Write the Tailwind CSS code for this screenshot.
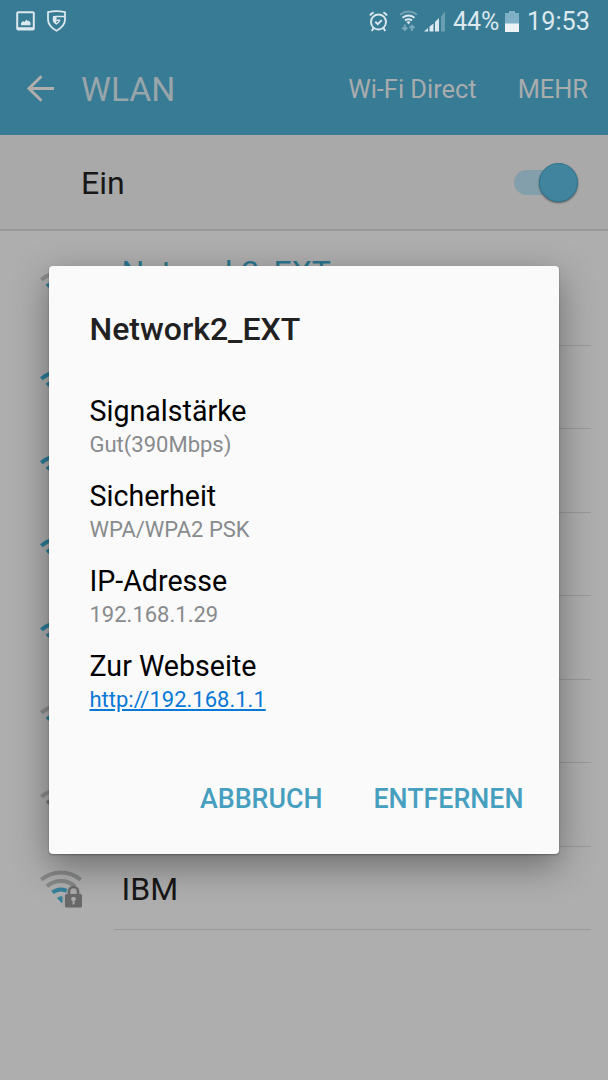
<!DOCTYPE html>
<html lang="de">
<head>
    <meta charset="UTF-8">
    <meta name="viewport" content="width=device-width, initial-scale=1.0">
    <title>WLAN</title>
    <script src="https://cdn.jsdelivr.net/npm/@tailwindcss/browser@4"></script>
</head>
<body class="bg-[#aeaeae] font-['Roboto',sans-serif]">
    <!-- wifi arcs, outer to inner -->
    <svg class="hidden">
        <symbol id="arc1" viewBox="0 0 42 38"><path d="M1.3 9.8a30 30 0 0 1 39.4 0" fill="none" stroke="currentColor" stroke-width="4"/></symbol>
        <symbol id="arc2" viewBox="0 0 42 38"><path d="M7 16.3a21.500 21.500 0 0 1 28 0" fill="none" stroke="currentColor" stroke-width="4"/></symbol>
        <symbol id="arc3" viewBox="0 0 42 38"><path d="M12.500 22.600a13 13 0 0 1 17 0" fill="none" stroke="currentColor" stroke-width="4"/></symbol>
        <symbol id="dot" viewBox="0 0 42 38"><path d="M17 28q4-3.500 8 0l-3 5.500z" fill="currentColor"/></symbol>
    </svg>

    <div class="relative h-[1080px] w-[608px] overflow-hidden">
        <header class="h-[135px] bg-[#387b94]">
            <!-- status bar -->
            <div class="flex h-[42px] items-center pl-4 pr-[18px] text-[#dbe8ee]">
                <svg class="h-5 w-[19px]" viewBox="0 0 19 20" fill="none">
                    <rect x="1.200" y="1.200" width="16.600" height="17.200" rx="1" stroke="currentColor" stroke-width="2"/>
                    <path d="M2 17.600h15" stroke="currentColor" stroke-width="2.800"/>
                    <path d="M5 14.300v-2.300l2-2 1.500 1 2-2.600 1.300 1.800 1.200-.6 1.500 2.200v2.500z" fill="currentColor"/>
                </svg>
                <svg class="ml-3 h-[22px] w-[19px]" viewBox="0 0 19 22" fill="none">
                    <path d="M1 2.200q8.500-2 17 0v7.300q0 6.500-8.500 11.300Q1 16 1 9.500z" stroke="currentColor" stroke-width="1.800"/>
                    <path d="M17 6.500H9q-2.500 0-2.500 2v1.500q0 2.200 3 3.800 3-1.700 3-3.600H9.500" stroke="currentColor" stroke-width="1.500"/>
                    <path d="M6 6h3.500v6l-1 1.500-2.500-3z" fill="currentColor"/>
                </svg>
                <svg class="ml-auto h-[21px] w-[19px]" viewBox="0 0 19 21" fill="none" stroke="currentColor" stroke-width="1.900">
                    <circle cx="9.500" cy="11" r="7.500"/>
                    <path d="M6.300 10.800l2.500 2.400 4-4M1 4.500q1.200-2.200 3.600-3.200M18 4.500q-1.200-2.200-3.600-3.200M4.500 17l-1.700 3M14.500 17l1.700 3"/>
                </svg>
                <svg class="ml-[11px] h-[22px] w-[19px]" viewBox="0 0 19 22" fill="none" stroke="currentColor" stroke-width="1.900">
                    <path d="M1 4.800q8.500-6.500 17 0" opacity=".35"/>
                    <path d="M3.500 7.700q6-4.500 12 0M6 10.500q3.500-2.500 7 0"/>
                    <path d="M7.500 12q2-1.300 4 0l-2 2.400z" fill="currentColor" stroke="none"/>
                    <path d="M5.800 14.500v5M3.300 17.500l2.500 2.500 2.500-2.500M13 21v-5M10.500 18l2.500-2.500 2.500 2.500" opacity=".4"/>
                </svg>
                <svg class="ml-1.5 h-[21px] w-[22px]" viewBox="0 0 22 21" fill="currentColor">
                    <path d="M0 20.500l4-3.500v3.500zM5.500 15.500l4-3v8h-4zM11 11l4-4v13.500h-4z"/>
                    <path d="M17 5.500L21 .5v20h-4z" opacity=".32"/>
                </svg>
                <span class="ml-[7px] w-[47px] whitespace-nowrap pt-px text-[25px] leading-[30px]">44%</span>
                <svg class="ml-[5px] h-[21px] w-[14px]" viewBox="0 0 14 21">
                    <path d="M0 2h4V0h6v2h4v19H0z" fill="#7fb0c5"/>
                    <path d="M0 12.500h14V21H0z" fill="#edf2f4"/>
                </svg>
                <span class="ml-2 pt-px text-[25.300px] leading-[30px]">19:53</span>
            </div>
            <div class="flex h-[93px] items-center pl-[26px] pr-5 text-[#a9acad]">
                <svg class="h-7 w-7 text-[#b0aeac]" viewBox="0 0 28 28" fill="none" stroke="currentColor" stroke-width="3">
                    <path d="M28 13.500H3M15.500 1.300L3 13.500l12.500 12.200"/>
                </svg>
                <h1 class="ml-[27px] pt-0.5 text-[33.700px] leading-10 text-[#98a5aa]">WLAN</h1>
                <span class="ml-auto text-[25.400px] leading-8">Wi-Fi Direct</span>
                <span class="ml-[41px] text-[25.400px] leading-8">MEHR</span>
            </div>
        </header>

        <div class="flex h-24 items-center justify-between border-b-2 border-[#999] bg-[#a9a9a9] pl-[81px] pr-[30.500px]">
            <span class="pt-[2px] text-[32px] leading-10 text-[#171717]">Ein</span>
            <div class="flex h-[25px] w-[64px] items-center justify-end rounded-full bg-[#839fab]">
                <div class="size-[39px] shrink-0 rounded-full border border-[#2f7893] bg-[#40849e] shadow-[0_1px_2px_rgba(0,0,0,0.5)]"></div>
            </div>
        </div>

        <!-- networks -->
        <ul class="text-[#8c8c8c]">
            <li class="flex h-[114.500px] items-center pl-10 pr-[17px]">
                <div class="grid h-10 w-[42px] pt-0.5">
                    <svg class="col-start-1 row-start-1 size-full"><use href="#arc1"/></svg>
                    <svg class="col-start-1 row-start-1 size-full text-[#2a7c98]"><use href="#arc2"/></svg>
                </div>
                <div class="ml-8 h-full flex-1 border-b border-[#999] pl-[7.500px] pt-[21px] text-[32px] leading-10 text-[#2a7690]">Network2_EXT</div>
            </li>
            <li class="flex h-[83.500px] items-center pl-10 pr-[17px]">
                <div class="grid h-10 w-[42px] pt-0.5 text-[#2a7c98]">
                    <svg class="col-start-1 row-start-1 size-full"><use href="#arc1"/></svg>
                    <svg class="col-start-1 row-start-1 size-full"><use href="#arc2"/></svg>
                </div>
                <div class="ml-8 h-full flex-1 border-b border-[#999]"></div>
            </li>
            <li class="flex h-[83.500px] items-center pl-10 pr-[17px]">
                <div class="grid h-10 w-[42px] pt-0.5 text-[#2a7c98]">
                    <svg class="col-start-1 row-start-1 size-full"><use href="#arc1"/></svg>
                    <svg class="col-start-1 row-start-1 size-full"><use href="#arc2"/></svg>
                </div>
                <div class="ml-8 h-full flex-1 border-b border-[#999]"></div>
            </li>
            <li class="flex h-[83.500px] items-center pl-10 pr-[17px]">
                <div class="grid h-10 w-[42px] pt-0.5 text-[#2a7c98]">
                    <svg class="col-start-1 row-start-1 size-full"><use href="#arc1"/></svg>
                    <svg class="col-start-1 row-start-1 size-full"><use href="#arc2"/></svg>
                </div>
                <div class="ml-8 h-full flex-1 border-b border-[#999]"></div>
            </li>
            <li class="flex h-[83.500px] items-center pl-10 pr-[17px]">
                <div class="grid h-10 w-[42px] pt-0.5 text-[#2a7c98]">
                    <svg class="col-start-1 row-start-1 size-full"><use href="#arc1"/></svg>
                    <svg class="col-start-1 row-start-1 size-full"><use href="#arc2"/></svg>
                </div>
                <div class="ml-8 h-full flex-1 border-b border-[#999]"></div>
            </li>
            <li class="flex h-[83.500px] items-center pl-10 pr-[17px]">
                <div class="grid h-10 w-[42px] pt-0.5">
                    <svg class="col-start-1 row-start-1 size-full"><use href="#arc1"/></svg>
                    <svg class="col-start-1 row-start-1 size-full text-[#2a7c98]"><use href="#arc2"/></svg>
                </div>
                <div class="ml-8 h-full flex-1 border-b border-[#999]"></div>
            </li>
            <li class="flex h-[83.500px] items-center pl-10 pr-[17px]">
                <div class="grid h-10 w-[42px] pt-0.5">
                    <svg class="col-start-1 row-start-1 size-full"><use href="#arc1"/></svg>
                    <svg class="col-start-1 row-start-1 size-full text-[#777]"><use href="#arc2"/></svg>
                </div>
                <div class="ml-8 h-full flex-1 border-b border-[#999]"></div>
            </li>
            <li class="flex h-[83.500px] items-center pl-10 pr-[17px]">
                <div class="grid h-10 w-[42px] pt-0.5 text-[#868788]">
                    <svg class="col-start-1 row-start-1 size-full"><use href="#arc1"/></svg>
                    <svg class="col-start-1 row-start-1 size-full"><use href="#arc2"/></svg>
                    <svg class="col-start-1 row-start-1 size-full text-[#35809b]"><use href="#arc3"/></svg>
                    <svg class="col-start-1 row-start-1 size-full text-[#35809b]"><use href="#dot"/></svg>
                    <svg class="col-start-1 row-start-1 size-full" viewBox="0 0 42 38">
                        <path d="M22.500 38V25h3.500q0-9 7.500-9t7.500 9v13z" fill="#a9a9a9"/>
                        <path d="M29 25v-3.500a4.500 4.500 0 0 1 9 0v3.500" fill="none" stroke="#696969" stroke-width="2.600"/>
                        <rect x="25" y="24" width="17" height="13.500" rx="1.500" fill="#696969"/>
                        <path d="M33.500 27a2 2 0 0 1 1 3.900V34.500h-2v-3.600a2 2 0 0 1 1-3.900z" fill="#aaa"/>
                    </svg>
                </div>
                <div class="ml-8 flex h-full flex-1 items-center border-b border-[#999] pl-[7.500px] pt-0.5 text-[32px] leading-10 text-[#171717]">IBM</div>
            </li>
        </ul>

        <!-- details dialog -->
        <div class="absolute left-[49px] top-[266px] flex h-[588px] w-[510px] flex-col rounded bg-[#fafafa] pl-[40.500px] pr-[35.500px] pt-[43px] shadow-[0_12px_36px_rgba(0,0,0,0.38),0_1px_2px_rgba(0,0,0,0.3)]">
            <h2 class="text-[32px] font-medium leading-10 text-[#212121]">Network2_EXT</h2>
            <dl class="mt-11 text-[22px] leading-7 text-[#888b8d]">
                <dt class="text-[28.600px] leading-9 text-black">Signalstärke</dt>
                <dd class="mb-[19px] mt-0.5">Gut(390Mbps)</dd>
                <dt class="text-[28.600px] leading-9 text-black">Sicherheit</dt>
                <dd class="mb-[19px] mt-0.5">WPA/WPA2 PSK</dd>
                <dt class="text-[28.600px] leading-9 text-black">IP-Adresse</dt>
                <dd class="mb-[19px] mt-0.5">192.168.1.29</dd>
                <dt class="text-[28.600px] leading-9 text-black">Zur Webseite</dt>
                <dd class="mt-0.5 text-[#0a78d6]"><a href="#" class="underline">http://192.168.1.1</a></dd>
            </dl>
            <div class="mb-[39px] mt-auto flex justify-end gap-[51px] text-[26.800px] font-medium leading-8 text-[#479fbf]">
                <button>ABBRUCH</button>
                <button>ENTFERNEN</button>
            </div>
        </div>
    </div>
</body>
</html>
